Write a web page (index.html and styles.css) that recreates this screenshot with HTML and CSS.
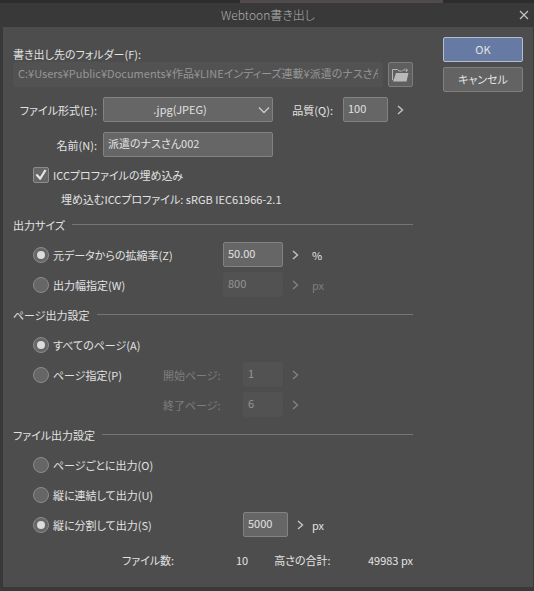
FILE: index.html
```html
<!DOCTYPE html>
<html lang="ja">
<head>
<meta charset="utf-8">
<title>Webtoon書き出し</title>
<link rel="stylesheet" href="styles.css">
</head>
<body>
<svg class="defs" aria-hidden="true">
  <symbol id="chevron" viewBox="0 0 7 10"><path d="M1 1 L5.5 5 L1 9" fill="none" stroke="currentColor" stroke-width="1.4"/></symbol>
</svg>
<div class="backdrop"><span class="backdrop-art"></span></div>
<form class="dialog">
  <header class="titlebar">
    <h1 class="title">Webtoon書き出し</h1>
    <button type="button" class="close" aria-label="閉じる"><svg width="10" height="10" viewBox="0 0 10 10"><path d="M1 1 L9 9 M9 1 L1 9" stroke="currentColor" stroke-width="1.2"/></svg></button>
  </header>
  <div class="body">
    <main class="settings">
      <label class="folder-label" for="folder">書き出し先のフォルダー(F):</label>
      <div class="row folder">
        <input id="folder" class="field path" type="text" value="C:¥Users¥Public¥Documents¥作品¥LINEインディーズ連載¥派遣のナスさん002" disabled>
        <button type="button" class="browse" aria-label="フォルダーを選択"><svg width="17" height="14" viewBox="0 0 17 14"><path d="M0.5 12 V1.5 H5.5 L7 3 H9" fill="none" stroke="#b4b4b4"/><path d="M4 5 H16.5 L14.5 13.5 H1 Z" fill="#b9b9b9"/><path d="M9.5 3.5 C11 1.5 12.5 1.5 15 2.5 M14 0.5 L15.5 2 L14 4" fill="none" stroke="#b4b4b4"/></svg></button>
      </div>
      <div class="row spaced">
        <label class="name" for="format">ファイル形式(E):</label>
        <span class="select-wrap">
          <select id="format" class="field wide"><option>.jpg(JPEG)</option></select>
          <svg class="arrow" width="12" height="8" viewBox="0 0 12 8"><path d="M1 1.5 L6 6.5 L11 1.5" fill="none" stroke="#c8c8c8" stroke-width="1.4"/></svg>
        </span>
        <label class="quality" for="quality">品質(Q):</label>
        <input id="quality" class="field mid" type="text" value="100">
        <button type="button" class="step" aria-label="品質を調整"><svg width="7" height="10"><use href="#chevron"/></svg></button>
      </div>
      <div class="row spaced">
        <label class="name" for="name">名前(N):</label>
        <input id="name" class="field wide" type="text" value="派遣のナスさん002">
      </div>
      <div class="row option">
        <input id="icc" class="check" type="checkbox" checked><label for="icc">ICCプロファイルの埋め込み</label>
      </div>
      <p class="profile">埋め込むICCプロファイル: sRGB IEC61966-2.1</p>

      <h2 class="heading">出力サイズ</h2>
      <div class="row option">
        <span class="choice"><input id="scale" class="radio" type="radio" name="size" checked><label for="scale">元データからの拡縮率(Z)</label></span>
        <input class="field large" type="text" value="50.00" aria-label="拡縮率">
        <button type="button" class="step" aria-label="拡縮率を調整"><svg width="7" height="10"><use href="#chevron"/></svg></button>
        <span class="unit">%</span>
      </div>
      <div class="row option">
        <span class="choice"><input id="width" class="radio" type="radio" name="size"><label for="width">出力幅指定(W)</label></span>
        <input class="field large" type="text" value="800" aria-label="出力幅" disabled>
        <button type="button" class="step" aria-label="出力幅を調整" disabled><svg width="7" height="10"><use href="#chevron"/></svg></button>
        <span class="unit off">px</span>
      </div>

      <h2 class="heading">ページ出力設定</h2>
      <div class="row option">
        <input id="all" class="radio" type="radio" name="pages" checked><label for="all">すべてのページ(A)</label>
      </div>
      <div class="row option">
        <span class="choice short"><input id="range" class="radio" type="radio" name="pages"><label for="range">ページ指定(P)</label></span>
        <label class="page off" for="first">開始ページ:</label>
        <input id="first" class="field small" type="text" value="1" disabled>
        <button type="button" class="step" aria-label="開始ページを調整" disabled><svg width="7" height="10"><use href="#chevron"/></svg></button>
      </div>
      <div class="row option">
        <span class="choice short"></span>
        <label class="page off" for="last">終了ページ:</label>
        <input id="last" class="field small" type="text" value="6" disabled>
        <button type="button" class="step" aria-label="終了ページを調整" disabled><svg width="7" height="10"><use href="#chevron"/></svg></button>
      </div>

      <h2 class="heading">ファイル出力設定</h2>
      <div class="row option">
        <input id="each" class="radio" type="radio" name="files"><label for="each">ページごとに出力(O)</label>
      </div>
      <div class="row option">
        <input id="join" class="radio" type="radio" name="files"><label for="join">縦に連結して出力(U)</label>
      </div>
      <div class="row option">
        <span class="choice split"><input id="split" class="radio" type="radio" name="files" checked><label for="split">縦に分割して出力(S)</label></span>
        <input class="field mid" type="text" value="5000" aria-label="分割する高さ">
        <button type="button" class="step" aria-label="分割する高さを調整"><svg width="7" height="10"><use href="#chevron"/></svg></button>
        <span class="unit tight">px</span>
      </div>
      <div class="row totals">
        <span>ファイル数:</span><output class="count">10</output>
        <span class="height-label">高さの合計:</span><output class="height">49983 px</output>
      </div>
    </main>
    <aside class="actions">
      <button type="submit" class="action primary">OK</button>
      <button type="button" class="action">キャンセル</button>
    </aside>
  </div>
</form>
</body>
</html>
```
FILE: styles.css
```css
* { box-sizing: border-box; }

body {
  margin: 0;
  min-height: 100vh;
  background: #262626;
  color: #e2e2e2;
  font: 11px/16px "Noto Sans CJK JP", sans-serif;
  font-feature-settings: "palt";
}

input, select, button {
  font: inherit;
  font-feature-settings: inherit;
  color: inherit;
}

.defs { position: absolute; width: 0; height: 0; }

.backdrop { display: flex; height: 3px; background: #2d2d2d; }
.backdrop-art { width: 38%; margin-left: 45%; background: #514b4d; }

.dialog { background: #393939; padding: 0 1px 4px 3px; }

.titlebar { display: flex; align-items: center; height: 24px; padding-right: 4px; }
.title { flex: 1; margin: 0; padding-left: 14px; text-align: center; font-size: 12px; font-weight: 300; color: #b0b0b0; }
.close { display: flex; padding: 0; border: 0; background: none; color: #c4c4c4; }

.body {
  display: grid;
  grid-template-columns: 1fr 80px;
  gap: 30px;
  padding: 10px 10px 15px;
  background: #4d4d4d;
}

.settings { display: flex; flex-direction: column; gap: 5px; min-width: 0; padding-top: 9px; }

.row { display: flex; align-items: center; height: 25px; white-space: nowrap; }
.row.spaced { margin-top: 5px; }
.row.option { padding-left: 20px; }
.row.folder { gap: 5px; margin-top: -5px; }

.field {
  height: 25px;
  margin: 0;
  padding: 0 4px 3px;
  border: 1px solid #828282;
  border-radius: 2px;
  outline: 0;
  background: #666;
}
.field:disabled { border-color: #525252; background: #525252; color: #969696; }
.path { flex: 1; min-width: 0; }
.wide { width: 170px; }
.large { width: 60px; }
.mid { width: 45px; }
.small { width: 40px; }

.browse {
  display: grid;
  place-items: center;
  width: 25px;
  height: 25px;
  padding: 0;
  border: 1px solid #7c7c7c;
  border-radius: 2px;
  background: #5f5f5f;
}

.name { width: 84px; margin-right: 6px; text-align: right; }
.quality { width: 60px; margin-right: 10px; text-align: right; }

.select-wrap { position: relative; display: flex; }
.select-wrap select { appearance: none; padding: 0 16px 2px 0; text-align: center; text-align-last: center; }
.arrow { position: absolute; right: 3px; top: 9px; pointer-events: none; }

.step { display: flex; margin-left: 9px; padding: 0; border: 0; background: none; color: #c4c4c4; }
.step:disabled { color: #828282; }
.unit { margin-left: 13px; }
.unit.tight { margin-left: 8px; }
.off { color: #7e7e7e; }

.check, .radio {
  appearance: none;
  display: grid;
  place-items: center;
  flex: none;
  width: 16px;
  height: 16px;
  margin: 0 4px 0 0;
  border: 1px solid #8c8c8c;
  background: #666;
}
.check { border-radius: 2px; }
.radio { border-radius: 50%; }
.radio:checked::after { content: ""; width: 8px; height: 8px; border-radius: 50%; background: #dcdcdc; }
.check:checked::after {
  content: "";
  width: 12px;
  height: 12px;
  background: #e4e4e4;
  clip-path: polygon(4% 54%, 18% 44%, 42% 68%, 80% 8%, 96% 16%, 48% 94%, 38% 94%);
}

.choice { display: flex; align-items: center; width: 190px; }
.choice.short { width: 130px; }
.choice.split { width: 210px; }
.page { width: 80px; }

.profile { height: 25px; margin: -5px 0; padding: 4px 0 0 48px; }

.heading { display: flex; align-items: center; gap: 7px; height: 25px; margin: 0; font-size: 11px; font-weight: 400; }
.heading::after { content: ""; flex: 1; height: 1px; background: #757575; }

.totals { margin-top: 5px; padding-left: 109px; }
.count { width: 74px; text-align: right; }
.height-label { margin-left: 26px; }
.height { flex: 1; text-align: right; }

.actions { display: flex; flex-direction: column; gap: 5px; }
.action {
  height: 25px;
  padding: 0 0 2px;
  border: 1px solid #808080;
  border-radius: 2px;
  background: #636363;
}
.primary { border-color: #b4bdd0; background: #677aa3; }
```
